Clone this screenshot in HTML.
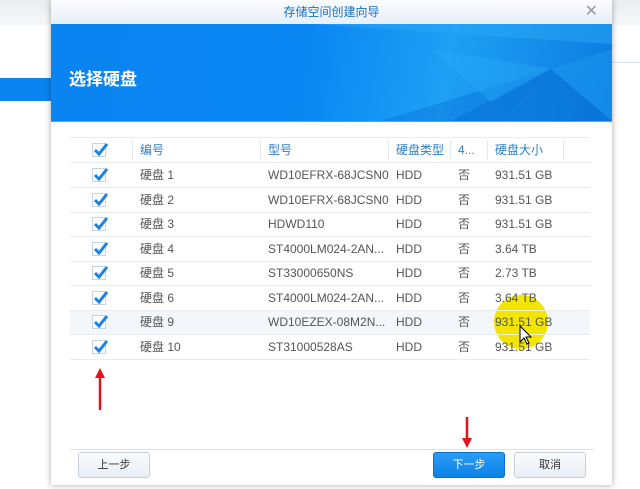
<!DOCTYPE html>
<html><head><meta charset="utf-8"><style>
body{margin:0;width:640px;height:489px;overflow:hidden;background:#fff;font-family:"Liberation Sans","Noto Sans CJK SC",sans-serif;position:relative}
.abs{position:absolute}
.dlg{left:51px;top:0;width:561px;height:485px;background:#fff;box-shadow:0 0 6px rgba(0,0,0,.35)}
.title{left:0;top:0;width:561px;height:24px;background:linear-gradient(#fbfdff,#e6eef7);text-align:center;font-size:12px;color:#1a6fc0;line-height:24px}
.banner{left:0;top:24px;width:561px;height:97px;background:linear-gradient(100deg,#0a84f0 0%,#0a86f2 45%,#1ea0f4 70%,#0b7be0 100%);overflow:hidden;border-bottom:1px solid #4aa8f0}
.row{position:absolute;left:70px;width:520px;height:24px;border-bottom:1px solid #e7ecf1;font-size:12px;color:#555;line-height:24px}
.row span{position:absolute}
.cb{position:absolute;left:22px;top:5px;width:14px;height:14px;border:1px solid #c8d3de;background:#fff;box-sizing:border-box}
.cb svg{position:absolute;left:0;top:-2px}
.btn{position:absolute;top:452px;width:70px;height:24px;border:1px solid #c7d0da;border-radius:3px;background:linear-gradient(#fafcfe,#e8eef5);font-size:11px;color:#333;text-align:center;line-height:24px}
</style></head><body>
<div class="abs" style="left:0;top:0;width:640px;height:25px;background:linear-gradient(#eaedf0,#f6f7f8)"></div>
<div class="abs" style="left:0;top:78px;width:60px;height:23px;background:#0a84f0"></div>
<div class="abs" style="left:600px;top:62px;width:40px;height:1px;background:#dde3ea"></div>
<div class="abs dlg">
<div class="abs title">存储空间创建向导<span style="position:absolute;right:14px;top:0;color:#999;font-size:16px">✕</span></div>
<div class="abs banner">
<svg width="561" height="97" style="position:absolute;left:0;top:0">
<polygon points="260,0 561,0 561,20" fill="#2aa8f6" opacity=".5"/>
<polygon points="400,97 500,45 561,97" fill="#0870d4" opacity=".6"/>
<polygon points="330,97 500,45 450,97" fill="#0a78dc" opacity=".5"/>
<polygon points="500,45 561,25 561,97" fill="#1a98ee" opacity=".5"/>
<polygon points="380,25 500,45 440,78" fill="#2bb0f8" opacity=".35"/>
</svg>
<div class="abs" style="left:18px;top:41px;color:#fff;font-size:17px;font-weight:bold">选择硬盘</div>
</div>
</div>
<div class="abs" style="left:70px;top:310px;width:520px;height:24px;background:#f3f7fb"></div>
<div class="abs" style="left:494px;top:295px;width:54px;height:54px;border-radius:50%;background:#f2e600"></div>
<div id="tbl"></div>
<div class="abs" style="left:70px;top:137px;width:520px;height:1px;background:#e7ecf1"></div>
<script>
var ck='<div class="cb"><svg width="16" height="16"><path d="M2 8 L6 12 L14 2" fill="none" stroke="#1883e0" stroke-width="3"/></svg></div>';
var h='<div class="row" style="top:138px;color:#2a80c8">'+ck+'<span style="left:70px">编号</span><span style="left:198px">型号</span><span style="left:326px">硬盘类型</span><span style="left:388px">4...</span><span style="left:425px">硬盘大小</span></div>';
var d=[["1","WD10EFRX-68JCSN0","931.51 GB"],["2","WD10EFRX-68JCSN0","931.51 GB"],["3","HDWD110","931.51 GB"],["4","ST4000LM024-2AN...","3.64 TB"],["5","ST33000650NS","2.73 TB"],["6","ST4000LM024-2AN...","3.64 TB"],["9","WD10EZEX-08M2N...","931.51 GB"],["10","ST31000528AS","931.51 GB"]];
for(var i=0;i<d.length;i++){var t=163+i*24.5;h+='<div class="row" style="top:'+t+'px">'+ck+'<span style="left:70px">硬盘 '+d[i][0]+'</span><span style="left:198px">'+d[i][1]+'</span><span style="left:326px">HDD</span><span style="left:388px">否</span><span style="left:425px">'+d[i][2]+'</span></div>';}
document.getElementById('tbl').innerHTML=h;
</script>
<svg class="abs" style="left:0;top:0" width="640" height="489">
<g stroke="#e3e8ee"><line x1="132.5" y1="140" x2="132.5" y2="160"/><line x1="260.5" y1="140" x2="260.5" y2="160"/><line x1="388.5" y1="140" x2="388.5" y2="160"/><line x1="450.5" y1="140" x2="450.5" y2="160"/><line x1="487.5" y1="140" x2="487.5" y2="160"/><line x1="563.5" y1="140" x2="563.5" y2="160"/></g>
<path d="M520 326 l0 16 l4 -4 l3 6 l2 -1 l-3 -6 l5 0 z" fill="#fff" stroke="#000" stroke-width="1"/>
<line x1="100" y1="410" x2="100" y2="377" stroke="#e0141c" stroke-width="2.5"/><polygon points="95,378 105,378 100,368" fill="#e0141c"/>
<line x1="467" y1="417" x2="467" y2="440" stroke="#e0141c" stroke-width="2.5"/><polygon points="462,438 472,438 467,448" fill="#e0141c"/>
<line x1="70" y1="449.5" x2="594" y2="449.5" stroke="#e0e4e8"/>
</svg>
<div class="btn" style="left:78px">上一步</div>
<div class="btn" style="left:433px;background:linear-gradient(#2a9cf4,#0c82e8);border-color:#0a72d0;color:#fff">下一步</div>
<div class="btn" style="left:514px">取消</div>
</body></html>
